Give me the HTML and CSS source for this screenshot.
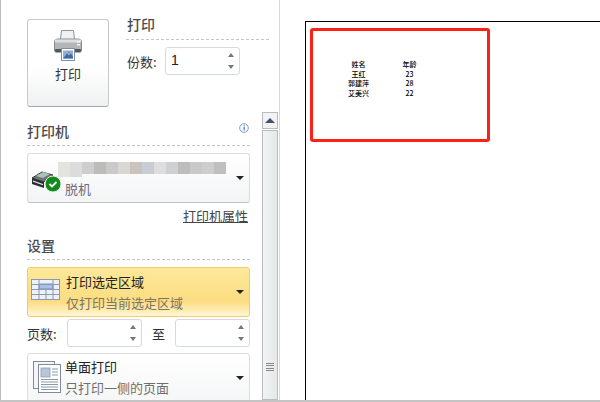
FILE: index.html
```html
<!DOCTYPE html>
<html lang="zh-CN">
<head>
<meta charset="utf-8">
<title>打印</title>
<link rel="stylesheet" href="styles.css">
</head>
<body>
<div class="app">
  <aside class="rail">
    <section class="top">
      <button class="print-btn">
        <svg class="print-icon" width="30" height="31" viewBox="0 0 30 31">
          <path d="M8.500 .5h12l1 9h-14z" fill="#eef1f5" stroke="#8f949a"/>
          <path d="M1.500 12q0-3 3-3h21q3 0 3 3v9h-27z" fill="#b4b7b8" stroke="#85888a"/>
          <rect x="2" y="9.500" width="26" height="3" fill="#dcdedf"/>
          <rect x="2" y="19" width="26" height="3.500" rx="1" fill="#55585b"/>
          <rect x="24" y="11" width="3" height="1.500" fill="#f4f4f4"/>
          <rect x="24" y="14" width="3" height="1.500" fill="#f4f4f4"/>
          <rect x="8.500" y="18.500" width="13" height="12" fill="#fff" stroke="#7d8fa6"/>
          <rect x="10" y="20.500" width="10" height="8" fill="#8fb0d8"/>
          <path d="M10 28.500l4-5 2 2 2-2 2 3v2z" fill="#3d6aa3"/>
          <circle cx="16" cy="22.500" r="1" fill="#e36a4a"/>
        </svg>
        <span>打印</span>
      </button>
      <div class="copies">
        <h2 class="title">打印</h2>
        <div class="copies-row">
          <label class="field-label">份数:</label>
          <div class="spin wide"><span class="spin-value">1</span><span class="arrows"><i class="up"></i><i class="down"></i></span></div>
        </div>
      </div>
    </section>
    <div class="lower">
      <div class="controls">
        <h2 class="title heading">
          <span>打印机</span>
          <svg class="info" width="10" height="10" viewBox="0 0 10 10"><circle cx="5" cy="5" r="4.300" fill="#fff" stroke="#6f9bd4"/><rect x="4.500" y="4" width="1.200" height="3.500" fill="#3f78c4"/><rect x="4.500" y="2.200" width="1.200" height="1.200" fill="#3f78c4"/></svg>
        </h2>
        <div class="drop printer">
          <svg class="drop-icon" width="30" height="24" viewBox="0 0 30 24">
            <path d="M1 10l10-6 11 3-9 7z" fill="#6d7276" stroke="#33373a"/>
            <path d="M5 8l7-4 7 2-7 4z" fill="#a9c2bc"/>
            <path d="M1 10l12 4v6L1 16z" fill="#2c2e30"/>
            <path d="M2 12.500l10 3.500v1.200L2 13.700z" fill="#e8e8e8"/>
            <circle cx="22" cy="16" r="8" fill="#118a1b" stroke="#e6f2e6"/>
            <path d="M18.500 16l2.500 2.500 4.500-4.500" fill="none" stroke="#fff" stroke-width="1.800"/>
          </svg>
          <div class="drop-text">
            <svg class="blur" width="168" height="17" viewBox="0 0 168 17">
              <rect width="12" height="15" fill="#e4e3df"/><rect x="12" width="12" height="15" fill="#dcdcdc"/><rect x="24" width="12" height="12" fill="#cdcecd"/><rect x="36" width="12" height="12" fill="#bcbcbb"/><rect x="48" width="12" height="12" fill="#cacaca"/><rect x="60" width="12" height="12" fill="#d8d7d3"/><rect x="72" width="12" height="12" fill="#c8c3bc"/><rect x="84" width="12" height="12" fill="#c9ccd3"/><rect x="96" width="12" height="12" fill="#dedede"/><rect x="108" width="12" height="12" fill="#cfd0d2"/><rect x="120" width="12" height="12" fill="#bdbdbd"/><rect x="132" width="12" height="12" fill="#c9c9c9"/><rect x="144" width="12" height="12" fill="#cdcdcf"/><rect x="156" width="12" height="12" fill="#bfbfbf"/>
            </svg>
            <span class="sub short">脱机</span>
          </div>
          <i class="caret"></i>
        </div>
        <div class="link-row"><a class="link">打印机属性</a></div>
        <h2 class="title heading settings">设置</h2>
        <div class="drop selected">
          <svg class="drop-icon" width="29" height="21" viewBox="0 0 29 21">
            <rect x=".5" y=".5" width="28" height="20" fill="#eef1f7" stroke="#8d99ac"/>
            <rect x="8" y="5" width="14" height="5" fill="#a9c1ea" stroke="#5b80b8" stroke-width=".8"/>
            <path d="M0 5.500h29M0 10.500h29M0 15.500h29M8 0v21M15 10v11M22 0v21" stroke="#8d99ac" fill="none"/>
          </svg>
          <div class="drop-text">
            <span class="main">打印选定区域</span>
            <span class="sub">仅打印当前选定区域</span>
          </div>
          <i class="caret"></i>
        </div>
        <div class="pages">
          <label class="field-label">页数:</label>
          <div class="spin"><span class="spin-value"></span><span class="arrows"><i class="up"></i><i class="down"></i></span></div>
          <span class="to">至</span>
          <div class="spin"><span class="spin-value"></span><span class="arrows"><i class="up"></i><i class="down"></i></span></div>
        </div>
        <div class="drop single">
          <svg class="drop-icon" width="28" height="32" viewBox="0 0 28 32">
            <rect x=".5" y=".5" width="21" height="27" fill="#f4f5f7" stroke="#7e8a99"/>
            <rect x="5.500" y="3.500" width="22" height="28" fill="#fff" stroke="#7e8a99"/>
            <rect x="8" y="7" width="9" height="9" fill="#b9c6d8" stroke="#8c9ab0" stroke-width=".8"/>
            <path d="M19 8h6M19 11h6M19 14h6M8 18.500h17M8 21h17M8 23.500h17M8 26h17M8 28.500h17" stroke="#8d99ac"/>
          </svg>
          <div class="drop-text">
            <span class="main">单面打印</span>
            <span class="sub">只打印一侧的页面</span>
          </div>
          <i class="caret"></i>
        </div>
      </div>
      <div class="scrollbar">
        <div class="sb-btn"><i></i></div>
        <div class="sb-thumb"><b></b><b></b><b></b><b></b></div>
      </div>
    </div>
  </aside>
  <main class="preview">
    <div class="sheet">
      <div class="mark">
        <table class="data">
          <tr><td>姓名</td><td>年龄</td></tr>
          <tr><td>王红</td><td>23</td></tr>
          <tr><td>郭建萍</td><td>28</td></tr>
          <tr><td>艾美兴</td><td>22</td></tr>
        </table>
      </div>
    </div>
  </main>
</div>
<div class="bottom"></div>
</body>
</html>
```
FILE: styles.css
```css
* { box-sizing: border-box; }
html, body { margin: 0; padding: 0; }
body {
  width: 600px;
  height: 402px;
  overflow: hidden;
  background: #fff;
  color: #3b3b3b;
  font-family: "Noto Sans CJK SC", "Liberation Sans", sans-serif;
  font-size: 12px;
}
.app { display: flex; height: 400px; overflow: hidden; }
.bottom { height: 2px; background: #c4c4c4; }

.rail {
  width: 280px;
  flex: none;
  height: 400px;
  border-left: 1px solid #bcbcbc;
  border-right: 1px solid #d9d9d9;
  padding-top: 19px;
  display: flex;
  flex-direction: column;
}
.top { display: flex; padding-left: 26px; height: 93px; }
.print-btn {
  width: 82px;
  height: 88px;
  flex: none;
  padding: 10px 0 0;
  border: 1px solid #c9c9c9;
  border-bottom-color: #a8a8a8;
  border-radius: 3px;
  background: linear-gradient(#fff 55%, #eff0f1);
  color: #333;
  font: inherit;
  font-size: 13px;
  display: flex;
  flex-direction: column;
  align-items: center;
}
.print-btn span { margin-top: 3px; line-height: 19px; }
.print-icon { display: block; }
.copies { width: 143px; margin-left: 17px; }
.title {
  margin: 0;
  font-size: 14px;
  font-weight: 500;
  line-height: 18px;
  color: #4b4b4b;
  border-bottom: 1px dashed #c6c6c6;
}
.copies .title { height: 24px; line-height: 16px; padding-left: 1px; margin-top: -3px; }
.copies-row { display: flex; align-items: center; margin-top: 7px; padding-left: 1px; gap: 8px; }
.field-label { font-size: 13px; color: #333; line-height: 27px; width: 30px; flex: none; }

.spin {
  width: 75px;
  height: 28px;
  flex: none;
  display: flex;
  justify-content: space-between;
  align-items: stretch;
  border: 1px solid #d5dae2;
  border-radius: 3px;
  background: #fff;
}
.spin-value { padding-left: 5px; font-family: "Liberation Sans", sans-serif; font-size: 14px; line-height: 25px; color: #222; }
.arrows { width: 13px; display: flex; flex-direction: column; justify-content: space-between; align-items: center; padding: 5px 0 5px; margin-right: 2px; }
.up, .down { display: block; width: 0; height: 0; border-left: 3.500px solid transparent; border-right: 3.500px solid transparent; }
.up { border-bottom: 4px solid #777; }
.down { border-top: 4px solid #777; }

.lower { display: flex; flex: 1; min-height: 0; padding-left: 26px; }
.controls { width: 223px; flex: none; }
.heading { height: 24px; position: relative; display: flex; justify-content: space-between; align-items: flex-start; margin-top: 10px; }
.heading span { display: block; }
.info { margin: 0 1px 0 0; transform: translateY(1px); }
.drop {
  display: flex;
  align-items: flex-start;
  margin-top: 7px;
  border: 1px solid #dadce0;
  border-radius: 3px;
  background: linear-gradient(#fff, #f3f4f5);
  position: relative;
}
.drop-icon { flex: none; display: block; overflow: visible; }
.drop-text { display: flex; flex-direction: column; }
.main { font-size: 13px; line-height: 20px; color: #222; }
.sub { font-size: 13px; line-height: 20px; color: #6f6f6f; }
.caret {
  position: absolute;
  right: 5px;
  top: 22px;
  width: 0;
  height: 0;
  border-left: 4px solid transparent;
  border-right: 4px solid transparent;
  border-top: 4px solid #222;
}
.printer { height: 50px; border-bottom-color: #c4c4c4; }
.printer .drop-icon { margin: 14px 0 0 3px; }
.printer .drop-text { margin: 8px 0 0 -3px; }
.blur { display: block; filter: blur(.6px); }
.short { margin-left: 7px; color: #6c6c82; }
.link-row { display: flex; justify-content: flex-end; margin-top: 4px; padding-right: 2px; height: 20px; }
.link { font-size: 13px; line-height: 18px; color: #444; text-decoration: underline; }
.settings { margin-top: 9px; height: 24px; }
.selected {
  height: 50px;
  border-color: #f0cc6a;
  background: linear-gradient(#fde89a, #fbdd82 70%, #fff6d6 100%);
}
.selected .drop-icon { margin: 11px 0 0 3px; }
.selected .drop-text { margin: 4px 0 0 6px; }
.selected .sub { color: #7b7460; margin-top: 1px; }
.pages { display: flex; align-items: center; height: 28px; margin-top: 2px; }
.pages .field-label { width: 40px; }
.pages .spin { width: 75px; }
.to { width: 33px; text-align: center; flex: none; font-size: 13px; color: #333; }
.single { height: 60px; margin-top: 6px; }
.single .drop-icon { margin: 7px 0 0 5px; }
.single .drop-text { margin: 3px 0 0 4px; }
.single .sub { margin-top: 1px; }

.scrollbar { width: 16px; margin-left: 12px; display: flex; flex-direction: column; }
.sb-btn {
  height: 17px;
  border: 1px solid #b9bdc2;
  background: #f2f2f2;
  display: flex;
  align-items: center;
  justify-content: center;
}
.sb-btn i { width: 0; height: 0; border-left: 5px solid transparent; border-right: 5px solid transparent; border-bottom: 5px solid #45507a; }
.sb-thumb {
  flex: 1;
  margin-top: 1px;
  border: 1px solid #b9bdc2;
  background: linear-gradient(90deg, #f2f3f3, #e6e7e8);
  display: flex;
  flex-direction: column;
  justify-content: flex-end;
  align-items: center;
  gap: 1.500px;
  padding-bottom: 28px;
}
.sb-thumb b { width: 8px; height: 1px; background: #888; }

.preview { flex: 1; padding: 21px 0 0 25px; min-width: 0; background: #fff; }
.sheet {
  height: 100%;
  border-top: 1px solid #000;
  border-left: 1px solid #000;
  padding: 6px 0 0 4px;
  margin-right: -10px;
}
.mark {
  width: 180px;
  height: 114px;
  border: 3px solid #fb2116;
  border-radius: 3px;
  padding: 29px 0 0 29px;
}
.data { border-collapse: collapse; color: #000; font-size: 7px; font-weight: 500; }
.data td { padding: 0; height: 9.500px; line-height: 9px; text-align: center; }
.data td:first-child { width: 33px; }
.data td:last-child { width: 69px; padding-right: 0; }
```
